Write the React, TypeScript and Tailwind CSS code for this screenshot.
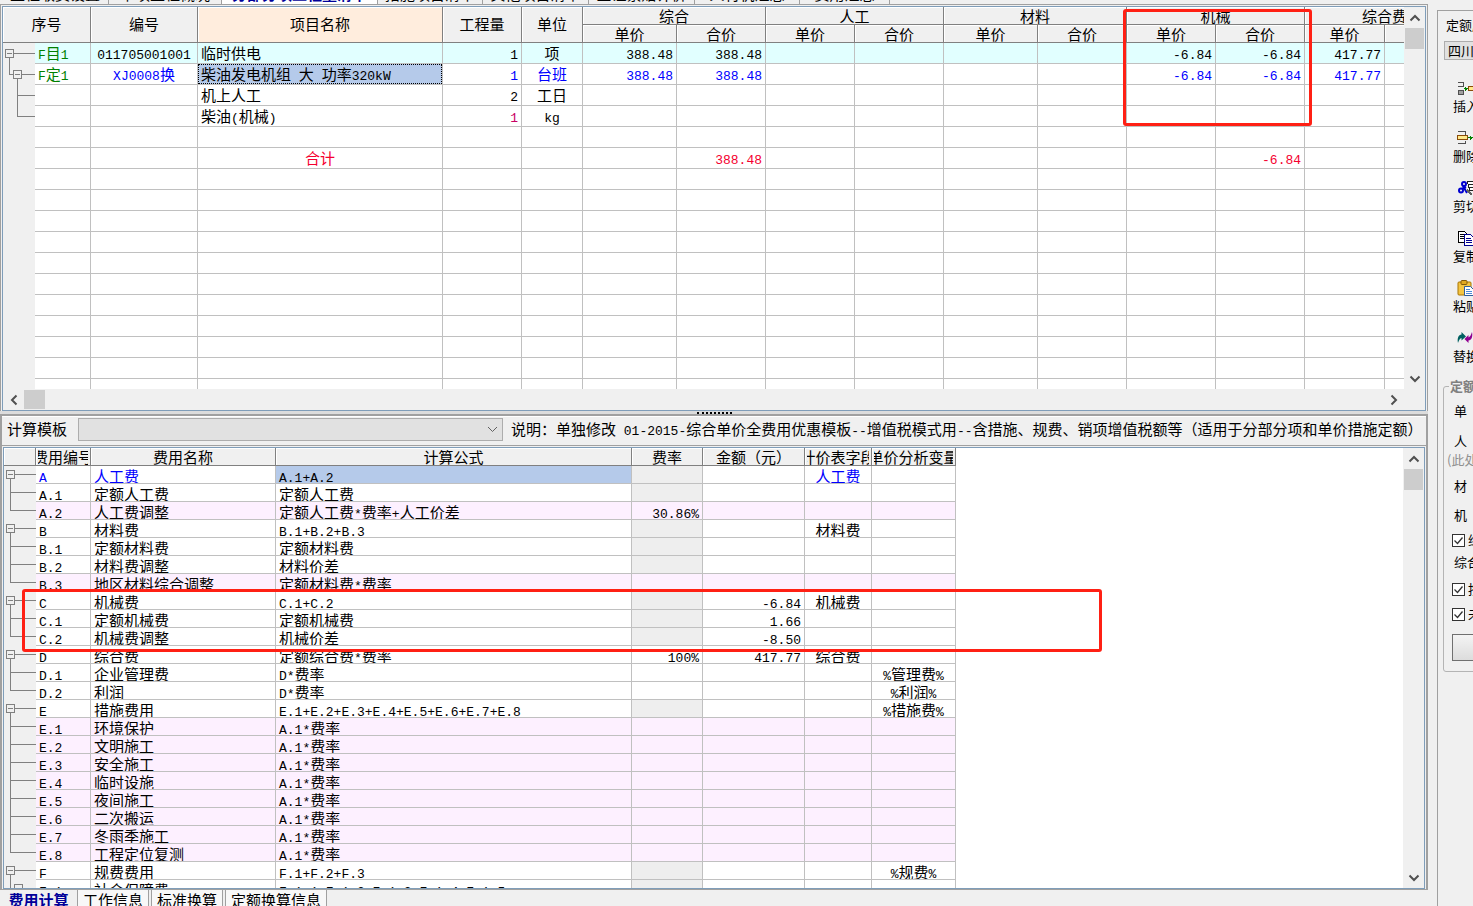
import { Fragment, type ReactNode } from 'react'

const LINE = 'border-[#c0c0c0]'

type Align = 'left' | 'center' | 'right'

interface BillRow {
  tree?: 'root' | 'sub' | 'leaf' | 'last'
  no?: string
  code?: string
  name?: string
  qty?: string
  unit?: string
  price?: string
  total?: string
  machPrice?: string
  machTotal?: string
  fee?: string
  color?: string
  cyan?: boolean
}

interface FeeRow {
  code: string
  name: string
  formula: string
  rate?: string
  amount?: string
  field?: string
  variable?: string
  kind: 'white' | 'grey' | 'pink'
}

const billRows: BillRow[] = [
  { tree: 'root', no: 'F目1', code: '011705001001', name: '临时供电', qty: '1', unit: '项', price: '388.48', total: '388.48', machPrice: '-6.84', machTotal: '-6.84', fee: '417.77', cyan: true },
  { tree: 'sub', no: 'F定1', code: 'XJ0008换', name: '柴油发电机组 大 功率320kW', qty: '1', unit: '台班', price: '388.48', total: '388.48', machPrice: '-6.84', machTotal: '-6.84', fee: '417.77', color: 'text-[#0000ff]' },
  { tree: 'leaf', name: '机上人工', qty: '2', unit: '工日' },
  { tree: 'last', name: '柴油(机械)', qty: '1', unit: 'kg' },
  {},
  { name: '合计', total: '388.48', machTotal: '-6.84', color: 'text-[#f5002f]' },
  {}, {}, {}, {}, {}, {}, {}, {}, {}, {}, {},
]

const feeRows: FeeRow[] = [
  { code: 'A', name: '人工费', formula: 'A.1+A.2', field: '人工费', kind: 'grey' },
  { code: 'A.1', name: '定额人工费', formula: '定额人工费', kind: 'grey' },
  { code: 'A.2', name: '人工费调整', formula: '定额人工费*费率+人工价差', rate: '30.86%', kind: 'pink' },
  { code: 'B', name: '材料费', formula: 'B.1+B.2+B.3', field: '材料费', kind: 'grey' },
  { code: 'B.1', name: '定额材料费', formula: '定额材料费', kind: 'grey' },
  { code: 'B.2', name: '材料费调整', formula: '材料价差', kind: 'grey' },
  { code: 'B.3', name: '地区材料综合调整', formula: '定额材料费*费率', kind: 'pink' },
  { code: 'C', name: '机械费', formula: 'C.1+C.2', amount: '-6.84', field: '机械费', kind: 'grey' },
  { code: 'C.1', name: '定额机械费', formula: '定额机械费', amount: '1.66', kind: 'grey' },
  { code: 'C.2', name: '机械费调整', formula: '机械价差', amount: '-8.50', kind: 'grey' },
  { code: 'D', name: '综合费', formula: '定额综合费*费率', rate: '100%', amount: '417.77', field: '综合费', kind: 'white' },
  { code: 'D.1', name: '企业管理费', formula: 'D*费率', variable: '%管理费%', kind: 'white' },
  { code: 'D.2', name: '利润', formula: 'D*费率', variable: '%利润%', kind: 'white' },
  { code: 'E', name: '措施费用', formula: 'E.1+E.2+E.3+E.4+E.5+E.6+E.7+E.8', variable: '%措施费%', kind: 'grey' },
  { code: 'E.1', name: '环境保护', formula: 'A.1*费率', kind: 'pink' },
  { code: 'E.2', name: '文明施工', formula: 'A.1*费率', kind: 'pink' },
  { code: 'E.3', name: '安全施工', formula: 'A.1*费率', kind: 'pink' },
  { code: 'E.4', name: '临时设施', formula: 'A.1*费率', kind: 'pink' },
  { code: 'E.5', name: '夜间施工', formula: 'A.1*费率', kind: 'pink' },
  { code: 'E.6', name: '二次搬运', formula: 'A.1*费率', kind: 'pink' },
  { code: 'E.7', name: '冬雨季施工', formula: 'A.1*费率', kind: 'pink' },
  { code: 'E.8', name: '工程定位复测', formula: 'A.1*费率', kind: 'pink' },
  { code: 'F', name: '规费费用', formula: 'F.1+F.2+F.3', variable: '%规费%', kind: 'grey' },
  { code: 'F.1', name: '社会保障费', formula: 'F.1.1+F.1.2+F.1.3+F.1.4+F.1.5', kind: 'grey' },
]

// Latin runs use the monospaced face, one size below the Chinese text
function Txt({ children }: { children: string }) {
  return (
    <>
      {children.split(/([\x20-\x7e]+)/).map((part, i) =>
        i % 2 ? (
          <span key={i} className="font-['Liberation_Mono',monospace] text-[13px]">{part}</span>
        ) : (
          <Fragment key={i}>{part}</Fragment>
        )
      )}
    </>
  )
}

const ALIGN: Record<Align, string> = {
  left: 'justify-start',
  center: 'justify-center',
  right: 'justify-end',
}

function BillCell({ text, align = 'right', className = '', selected = false }: { text?: string; align?: Align; className?: string; selected?: boolean }) {
  return (
    <td className={`p-0 border-r border-b ${LINE} ${className}`}>
      <div className={`flex h-5 whitespace-pre overflow-hidden ${ALIGN[align]} ${selected ? 'border border-dotted border-black bg-[#b5caea] px-[2px] leading-[18px]' : 'px-[3px] leading-5'}`}>
        {text && <span><Txt>{text}</Txt></span>}
      </div>
    </td>
  )
}

function FeeCell({ text, align = 'left', className = '' }: { text?: string; align?: Align; className?: string }) {
  return (
    <td className={`p-0 border-r border-b ${LINE} ${className}`}>
      <div className={`flex h-[17px] leading-5 px-[3px] whitespace-pre overflow-hidden ${ALIGN[align]}`}>
        {text && <span><Txt>{text}</Txt></span>}
      </div>
    </td>
  )
}

function HeadCell({ children, tall = false, colSpan, rowSpan, peach = false }: { children?: string; tall?: boolean; colSpan?: number; rowSpan?: number; peach?: boolean }) {
  return (
    <th colSpan={colSpan} rowSpan={rowSpan} className={`p-0 font-normal border-r border-b border-[#808080] shadow-[inset_1px_1px_0_#fff] ${peach ? 'bg-[#ffeddd]' : 'bg-[#f0f0f0]'}`}>
      <div className={`flex justify-center mx-[2px] overflow-hidden whitespace-nowrap ${tall ? 'h-[35px] leading-[34px]' : 'h-[17px] leading-[18px]'}`}>
        <span>{children}</span>
      </div>
    </th>
  )
}

function BillTree({ tree }: { tree?: BillRow['tree'] }) {
  return (
    <svg width="32" height="21" className="block" fill="none" stroke="#808080" shapeRendering="crispEdges">
      {tree === 'root' && <path d="M2.5 6.5h8v8h-8zM4 10.5h5M11 10.5h21M6.5 15v6" />}
      {tree === 'sub' && <path d="M6.5 0v10.5h4M10.5 6.5h8v8h-8zM12 10.5h5M19 10.5h13M14.5 15v6" />}
      {tree === 'leaf' && <path d="M14.5 0v21M14.5 10.5h18" />}
      {tree === 'last' && <path d="M14.5 0v10.5h18" />}
    </svg>
  )
}

function FeeTree({ code, last }: { code: string; last: boolean }) {
  return (
    <svg width="32" height="18" className="block" fill="none" stroke="#808080" shapeRendering="crispEdges">
      {code === 'F.1' ? (
        <path d="M6.5 0v18M6.5 8.5h4M10.5 4.5h8v8h-8zM12 8.5h5M19 8.5h13" />
      ) : code.length === 1 ? (
        <path d="M2.5 4.5h8v8h-8zM4 8.5h5M11 8.5h21M6.5 13v5" />
      ) : (
        <path d={last ? 'M6.5 0v8.5h26' : 'M6.5 0v18M6.5 8.5h26'} />
      )}
    </svg>
  )
}

function Arrow({ d }: { d: string }) {
  return (
    <svg width="12" height="12" viewBox="0 0 12 12" fill="none" stroke="#505050" strokeWidth="2" className="block">
      <path d={d} />
    </svg>
  )
}

const UP = 'M1.5 8.5L6 4L10.5 8.5'
const DOWN = 'M1.5 3.5L6 8L10.5 3.5'
const LEFT = 'M8.5 1.5L4 6L8.5 10.5'
const RIGHT = 'M3.5 1.5L8 6L3.5 10.5'

function VScroll() {
  return (
    <div className="w-[21px] shrink-0 bg-[#f0f0f0] flex flex-col items-center">
      <button aria-label="向上滚动" className="h-[21px] w-full flex items-center justify-center"><Arrow d={UP} /></button>
      <div className="w-[19px] h-[21px] bg-[#cdcdcd]" />
      <div className="flex-1" />
      <button aria-label="向下滚动" className="h-[21px] w-full flex items-center justify-center"><Arrow d={DOWN} /></button>
    </div>
  )
}

function BillTable() {
  return (
    <table className="table-fixed w-[1462px] border-separate border-spacing-0 bg-white">
      <colgroup>
        <col className="w-[32px]" />
        <col className="w-[56px]" />
        <col className="w-[107px]" />
        <col className="w-[245px]" />
        <col className="w-[79px]" />
        <col className="w-[61px]" />
        <col className="w-[94px]" />
        <col className="w-[89px]" />
        <col className="w-[89px]" />
        <col className="w-[89px]" />
        <col className="w-[94px]" />
        <col className="w-[89px]" />
        <col className="w-[89px]" />
        <col className="w-[89px]" />
        <col className="w-[80px]" />
        <col className="w-[80px]" />
      </colgroup>
      <thead>
        <tr>
          <HeadCell colSpan={2} rowSpan={2} tall>序号</HeadCell>
          <HeadCell rowSpan={2} tall>编号</HeadCell>
          <HeadCell rowSpan={2} tall peach>项目名称</HeadCell>
          <HeadCell rowSpan={2} tall>工程量</HeadCell>
          <HeadCell rowSpan={2} tall>单位</HeadCell>
          {['综合', '人工', '材料', '机械', '综合费'].map((g) => <HeadCell key={g} colSpan={2}>{g}</HeadCell>)}
        </tr>
        <tr>
          {[0, 1, 2, 3, 4].map((g) => (
            <Fragment key={g}>
              <HeadCell>单价</HeadCell>
              <HeadCell>合价</HeadCell>
            </Fragment>
          ))}
        </tr>
      </thead>
      <tbody>
        {billRows.map((r, i) => {
          const tone = `${r.cyan ? 'bg-[#e1ffff]' : ''} ${r.color ?? ''}`
          return (
            <tr key={i}>
              <td className="p-0 bg-[#f0f0f0]"><BillTree tree={r.tree} /></td>
              <BillCell text={r.no} align="left" className={`${r.cyan ? 'bg-[#e1ffff]' : ''} text-[#008000]`} />
              <BillCell text={r.code} align="center" className={tone} />
              <BillCell text={r.name} align={r.name === '合计' ? 'center' : 'left'} className={i === 1 ? '' : tone} selected={i === 1} />
              <BillCell text={r.qty} className={r.unit === 'kg' ? 'text-[#c80064]' : tone} />
              <BillCell text={r.unit} align="center" className={tone} />
              <BillCell text={r.price} className={tone} />
              <BillCell text={r.total} className={tone} />
              <BillCell className={tone} />
              <BillCell className={tone} />
              <BillCell className={tone} />
              <BillCell className={tone} />
              <BillCell text={r.machPrice} className={tone} />
              <BillCell text={r.machTotal} className={tone} />
              <BillCell text={r.fee} className={tone} />
              <BillCell className={tone} />
            </tr>
          )
        })}
      </tbody>
    </table>
  )
}

function FeeTable() {
  return (
    <table className="table-fixed w-[952px] border-separate border-spacing-0 bg-white">
      <colgroup>
        <col className="w-[32px]" />
        <col className="w-[55px]" />
        <col className="w-[185px]" />
        <col className="w-[356px]" />
        <col className="w-[71px]" />
        <col className="w-[102px]" />
        <col className="w-[67px]" />
        <col className="w-[84px]" />
      </colgroup>
      <thead>
        <tr>
          <HeadCell />
          {['费用编号', '费用名称', '计算公式', '费率', '金额（元）', '计价表字段', '单价分析变量'].map((h) => <HeadCell key={h}>{h}</HeadCell>)}
        </tr>
      </thead>
      <tbody>
        {feeRows.map((r, i) => {
          const bg = r.kind === 'pink' ? 'bg-[#fdf0ff]' : ''
          const tone = `${bg} ${i === 0 ? 'text-[#0000ff]' : ''}`
          const next = feeRows[i + 1]
          return (
            <tr key={r.code}>
              <td className="p-0 bg-[#f0f0f0]"><FeeTree code={r.code} last={!next || next.code.length === 1} /></td>
              <FeeCell text={r.code} className={tone} />
              <FeeCell text={r.name} className={tone} />
              <FeeCell text={r.formula} className={i === 0 ? 'bg-[#b5caea]' : bg} />
              <FeeCell text={r.rate} align="right" className={r.kind === 'grey' ? 'bg-[#eeeeee]' : bg} />
              <FeeCell text={r.amount} align="right" className={tone} />
              <FeeCell text={r.field} align="center" className={tone} />
              <FeeCell text={r.variable} align="center" className={tone} />
            </tr>
          )
        })}
      </tbody>
    </table>
  )
}

const topTabs = [
  { label: '工程取费设置', width: 'w-[107px]' },
  { label: '单项工程概况', width: 'w-[113px]' },
  { label: '分部分项工程量清单', width: 'w-[156px]', active: true },
  { label: '措施项目清单', width: 'w-[105px]' },
  { label: '其他项目清单', width: 'w-[106px]' },
  { label: '签证索赔计价', width: 'w-[106px]' },
  { label: '人材机汇总', width: 'w-[105px]' },
  { label: '费用汇总', width: 'w-[90px]' },
]

const bottomTabs = ['工作信息', '标准换算', '定额换算信息']

function ToolIcon({ children }: { children: ReactNode }) {
  return <svg width="20" height="16" viewBox="0 0 20 16" fill="none" className="block ml-[19px]" shapeRendering="crispEdges">{children}</svg>
}

const tools: { label: string; icon: ReactNode }[] = [
  {
    label: '插入',
    icon: (
      <>
        <path d="M1 2.5h5.500v4H1M1 10.500h5.500v4H1z" stroke="#505050" />
        <path d="M2 11h4v3H2z" fill="#a0a0a0" />
        <path d="M7 8.500h4M8.500 6.500v4M9.500 7.500v2" stroke="#008000" />
        <path d="M11.500 6.500h8v4h-8z" fill="#ffe98a" stroke="#8a4b08" />
      </>
    ),
  },
  {
    label: '删除',
    icon: (
      <>
        <path d="M1 1.500h7.500v4M1 13.500h7.500v-3" stroke="#505050" />
        <path d="M.5 5.500h10v4H.5z" fill="#ffe98a" stroke="#8a4b08" />
        <path d="M11 7.500h9M13.500 5.500v4M14.500 6.500v2" stroke="#008000" />
      </>
    ),
  },
  {
    label: '剪切',
    icon: (
      <>
        <path d="M10.500 1.500h9v9h-7zM12 4.500h6M12 7.500h6" fill="#fff" stroke="#202020" />
        <g stroke="#0000d0" strokeWidth="2" shapeRendering="auto">
          <circle cx="4" cy="10.500" r="2" />
          <circle cx="7" cy="4" r="2" />
          <path d="M6 6l4 7M5 9l4-2" />
        </g>
        <path d="M10 10l5 5" stroke="#606060" strokeWidth="2" />
      </>
    ),
  },
  {
    label: '复制',
    icon: (
      <>
        <path d="M1.500 1.500h6l3 3v8h-9z" fill="#fff" stroke="#000" />
        <path d="M3 4.500h4M3 6.500h4M3 8.500h4" stroke="#000" />
        <path d="M7.500 4.500h6l3 3v8h-9z" fill="#fff" stroke="#000090" />
        <path d="M9 8.500h5M9 10.500h6M9 12.500h6" stroke="#000090" />
      </>
    ),
  },
  {
    label: '粘贴',
    icon: (
      <g shapeRendering="auto">
        <rect x="1" y="2" width="13" height="13" rx="1" fill="#f4c542" stroke="#a87400" />
        <rect x="4" y="0.500" width="6" height="4" rx="1" fill="#e0a820" stroke="#80580a" />
        <path d="M7.500 6.500h6l3 3v6h-9z" fill="#fff" stroke="#305f9c" />
        <path d="M9 9.500h4M9 11.500h6M9 13.500h6" stroke="#4a8ad8" />
      </g>
    ),
  },
  {
    label: '替换',
    icon: (
      <g shapeRendering="auto">
        <path d="M1 13C0 8 1.500 5 4.500 4.500V2L9 6.500l-4.500 4V8C3 8.500 2 10 1 13z" fill="#006060" />
        <path d="M15 2c1 5-.5 8-3.500 8.500V13L7.500 9l4-4v2.500C13 7 14 5 15 2z" fill="#900090" />
      </g>
    ),
  },
]

function Check({ label, className }: { label: string; className: string }) {
  return (
    <label className={`flex items-center gap-[3px] pl-2 ${className}`}>
      <span className="relative block w-[13px] h-[13px] shrink-0">
        <input type="checkbox" defaultChecked className="block appearance-none w-[13px] h-[13px] border border-[#333] bg-white" />
        <svg width="13" height="13" viewBox="0 0 13 13" className="absolute inset-0 pointer-events-none" fill="none" stroke="#333">
          <path d="M2.500 6.500l3 3 5-6" strokeWidth="1.300" />
        </svg>
      </span>
      {label}
    </label>
  )
}

function SidePanel() {
  return (
    <aside className="w-[45px] shrink-0 overflow-hidden pt-[10px] pl-[9px] text-[13px] whitespace-nowrap">
      <div className="w-[120px] h-full border-t border-l border-[#a0a0a0]">
        <label htmlFor="library" className="block h-[30px] leading-[28px] pl-2">定额库</label>
        <select id="library" className="appearance-none block ml-[6px] w-[100px] h-[19px] leading-[16px] pl-[3px] border border-[#adadad] bg-[#e1e1e1]">
          <option>四川省</option>
        </select>
        <div className="mt-5">
          {tools.map((t) => (
            <button key={t.label} className="block w-full h-[50px] text-left">
              <ToolIcon>{t.icon}</ToolIcon>
              <span className="block h-[34px] pt-[2px] pl-[15px] leading-4">{t.label}</span>
            </button>
          ))}
        </div>
        <fieldset className="-mt-[2px] ml-[5px] w-[100px] border border-[#b4b4b4] rounded-[3px] pb-[10px]">
          <legend className="ml-[5px] px-[1px] h-4 leading-4 font-bold text-[#808080]">定额调整</legend>
          <div className="h-[34px] leading-[34px] pl-[10px]">单</div>
          <div className="h-[26px] leading-[26px] pl-[10px]">人</div>
          <div className="h-4 leading-3 pl-[3px] text-[#909090]">(此处</div>
          <div className="h-[32px] leading-[32px] pl-[10px]">材</div>
          <div className="h-[26px] leading-[26px] pl-[10px]">机</div>
          <Check label="综合" className="h-6" />
          <div className="h-5 leading-5 pl-[10px]">综合</div>
          <Check label="按" className="h-[34px]" />
          <Check label="未" className="h-4" />
          <button aria-label="应用" className="block mt-3 ml-2 w-[80px] h-[27px] border border-[#707070] bg-linear-to-b from-[#f4f4f4] to-[#dcdcdc]" />
        </fieldset>
      </div>
    </aside>
  )
}

export default function App() {
  return (
    <div className="h-screen flex overflow-hidden bg-[#f0f0f0] text-black text-[15px] font-['Noto_Sans_CJK_SC',sans-serif]">
      <main className="relative flex-1 min-w-0 flex flex-col">
        {/* Module tabs, scrolled mostly out of view */}
        <nav className="h-1 shrink-0 flex items-end overflow-hidden pl-[2px]">
          {topTabs.map((t) => (
            <button key={t.label} className={`h-5 leading-5 shrink-0 border-r border-[#a0a0a0] whitespace-nowrap ${t.width} ${t.active ? 'bg-white font-bold text-[#000099]' : ''}`}>
              {t.label}
            </button>
          ))}
        </nav>

        {/* Bill of quantities */}
        <section className="shrink-0 border border-b-0 border-[#a0a0a0] p-[1px] pb-0">
          <div className="border border-[#7f9db9]">
            <div className="flex h-[382px]">
              <div className="flex-1 min-w-0 overflow-hidden"><BillTable /></div>
              <VScroll />
            </div>
            <div className="flex h-[21px] items-center bg-[#f0f0f0]">
              <button aria-label="向左滚动" className="w-[21px] flex justify-center"><Arrow d={LEFT} /></button>
              <div className="w-[21px] h-[19px] bg-[#cdcdcd]" />
              <div className="flex-1" />
              <button aria-label="向右滚动" className="w-[21px] mr-[21px] flex justify-center"><Arrow d={RIGHT} /></button>
            </div>
          </div>
        </section>

        {/* Splitter with grip */}
        <div className="h-[5px] shrink-0 flex justify-center items-center border-b-2 border-[#a0a0a0] bg-[#dcdcdc]">
          <div className="w-[35px] border-t-2 border-dotted border-black" />
        </div>

        {/* Fee calculation */}
        <section className="flex-1 min-h-0 flex flex-col border-x-2 border-[#a0a0a0]">
          <div className="h-[29px] shrink-0 flex items-center pb-[3px] border-t border-white overflow-hidden whitespace-nowrap">
            <label htmlFor="template" className="w-[76px] shrink-0 pl-[5px]">计算模板</label>
            <span className="relative block w-[425px] shrink-0">
              <select id="template" className="appearance-none block w-full h-[23px] border border-[#adadad] bg-[#e1e1e1]">
                <option></option>
              </select>
              <svg width="11" height="7" viewBox="0 0 11 7" className="absolute right-[5px] top-2 pointer-events-none" fill="none" stroke="#606060">
                <path d="M1 1l4.500 4.500L10 1" />
              </svg>
            </span>
            <p className="pl-2 whitespace-pre"><Txt>说明：单独修改 01-2015-综合单价全费用优惠模板--增值税模式用--含措施、规费、销项增值税额等（适用于分部分项和单价措施定额）</Txt></p>
          </div>
          <div className="flex-1 min-h-0 flex border-y border-[#a0a0a0] px-[1px] pt-[1px]">
            <div className="flex-1 min-w-0 flex border border-[#7f9db9] bg-white">
              <div className="flex-1 min-w-0 overflow-hidden"><FeeTable /></div>
              <VScroll />
            </div>
          </div>
        </section>

        <nav className="h-4 shrink-0 flex items-start gap-[2px] pl-[2px] overflow-hidden whitespace-nowrap leading-[20px]">
          <button className="w-[73px] shrink-0 font-bold text-[#000099]">费用计算</button>
          {bottomTabs.map((t) => (
            <button key={t} className="shrink-0 px-[5px] border-x border-[#a0a0a0] bg-[#f8f8f8]">{t}</button>
          ))}
        </nav>

        {/* Review marks over the machinery figures */}
        <div className="absolute left-[1123px] top-[9px] w-[189px] h-[117px] border-3 border-[#ff2014] rounded-[3px] pointer-events-none" />
        <div className="absolute left-[22px] top-[589px] w-[1080px] h-[63px] border-3 border-[#ff2014] rounded-[3px] pointer-events-none" />
      </main>
      <SidePanel />
    </div>
  )
}
